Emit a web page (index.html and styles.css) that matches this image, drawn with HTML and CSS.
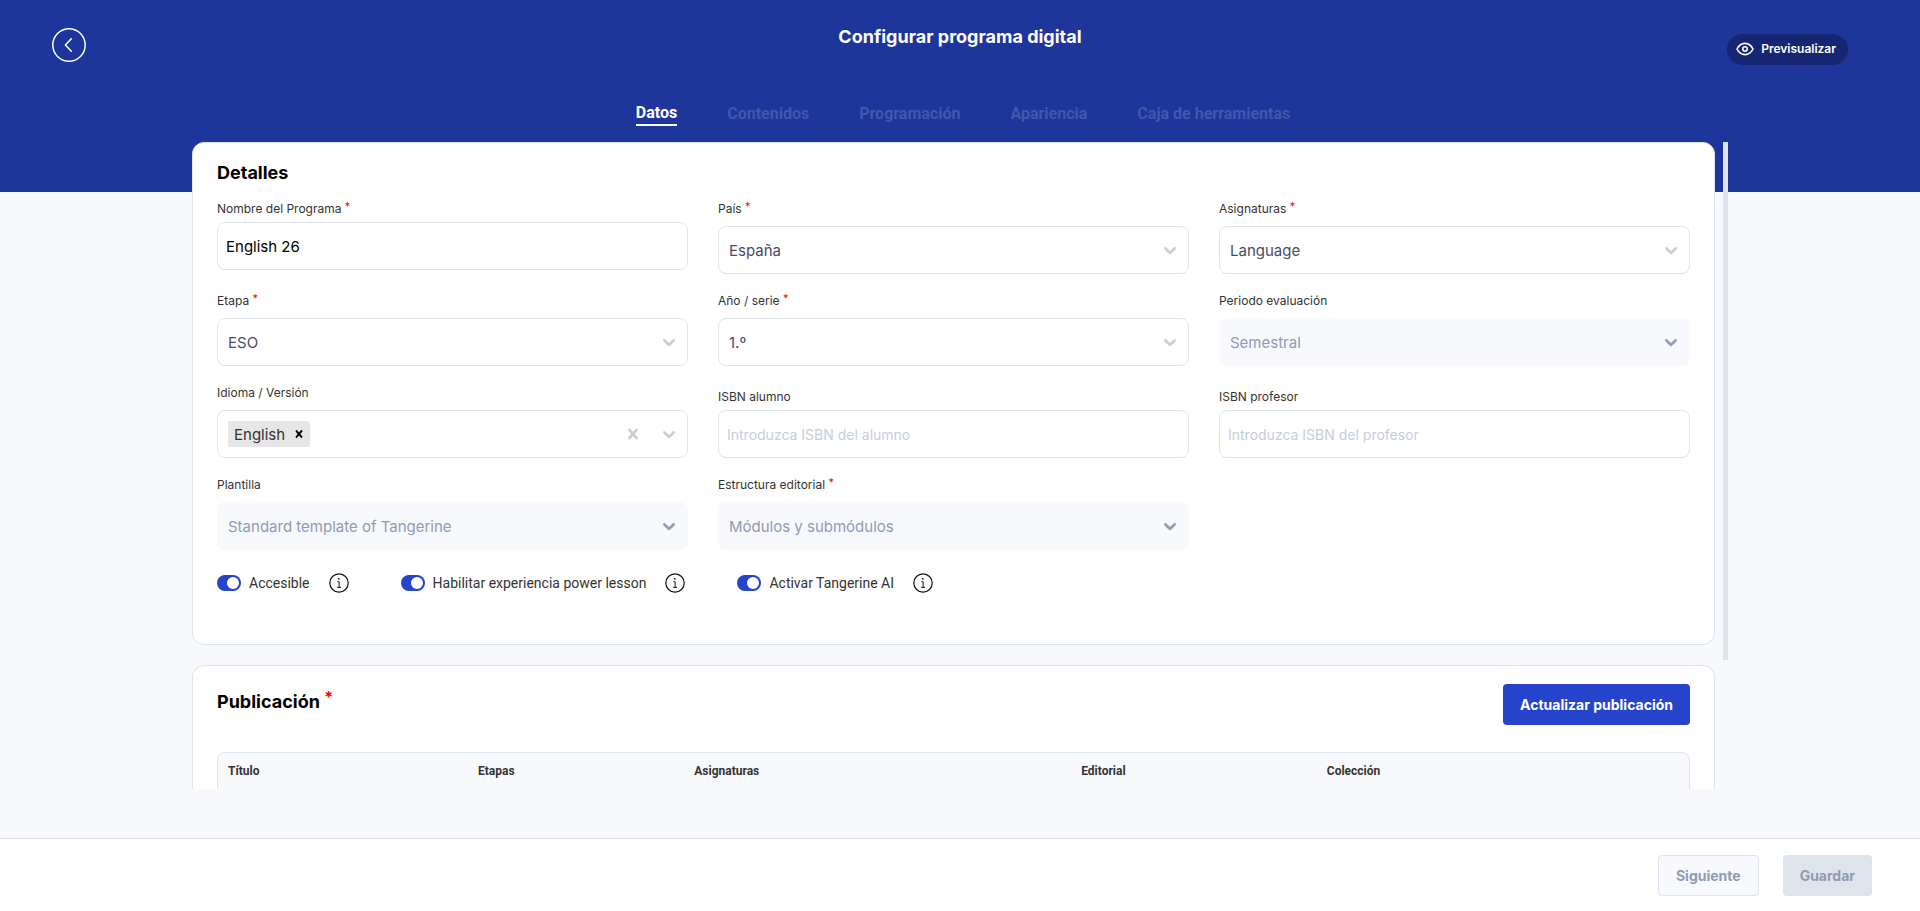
FILE: index.html
```html
<!DOCTYPE html>
<html lang="es">
<head>
  <meta charset="UTF-8">
  <meta name="viewport" content="width=device-width, initial-scale=1.0">
  <title>Configurar programa digital</title>
  <link rel="stylesheet" href="styles.css">
</head>
<body>
  <!-- shared icons -->
  <svg class="sprite" aria-hidden="true">
    <symbol id="chevron" viewBox="0 0 20 20">
      <path d="M4.516 7.548c0.436-0.446 1.043-0.481 1.576 0l3.908 3.747 3.908-3.747c0.533-0.481 1.141-0.446 1.574 0 0.436 0.445 0.408 1.197 0 1.615-0.406 0.418-4.695 4.502-4.695 4.502-0.217 0.223-0.502 0.335-0.787 0.335s-0.57-0.112-0.789-0.335c0 0-4.287-4.084-4.695-4.502s-0.436-1.17 0-1.615z"/>
    </symbol>
    <symbol id="cross" viewBox="0 0 20 20">
      <path d="M14.348 14.849c-0.469 0.469-1.229 0.469-1.697 0l-2.651-3.030-2.651 3.029c-0.469 0.469-1.229 0.469-1.697 0-0.469-0.469-0.469-1.229 0-1.697l2.758-3.15-2.759-3.152c-0.469-0.469-0.469-1.228 0-1.697s1.228-0.469 1.697 0l2.652 3.031 2.651-3.031c0.469-0.469 1.228-0.469 1.697 0s0.469 1.229 0 1.697l-2.758 3.152 2.758 3.15c0.469 0.469 0.469 1.229 0 1.698z"/>
    </symbol>
    <symbol id="info" viewBox="0 0 20 20">
      <circle cx="10" cy="10" r="9.2" fill="none" stroke="currentColor" stroke-width="1.2"/>
      <circle cx="9.8" cy="5.8" r="0.9"/>
      <path d="M8.4 8.7h1.7v5.6M8.2 14.4h3.8" fill="none" stroke="currentColor" stroke-width="1"/>
    </symbol>
  </svg>

  <header class="header">
    <button class="back" type="button" aria-label="Volver">
      <svg width="34" height="34" viewBox="0 0 34 34" fill="none" stroke="currentColor">
        <circle cx="17" cy="17" r="16.2" stroke-width="1.5"/>
        <path d="M19.3 10.8L13.4 17l5.9 6.2" stroke-width="1.6" stroke-linecap="round" stroke-linejoin="round"/>
      </svg>
    </button>
    <h1 class="title">Configurar programa digital</h1>
    <button class="preview" type="button">
      <svg width="18" height="14" viewBox="0 0 18 14" fill="none" stroke="currentColor" stroke-width="1.6">
        <path d="M1 7c1.8-3.6 4.6-5.6 8-5.6s6.2 2 8 5.6c-1.8 3.6-4.6 5.6-8 5.6S2.8 10.6 1 7z" stroke-linejoin="round"/>
        <circle cx="9" cy="7" r="2.2"/>
      </svg>
      Previsualizar
    </button>
  </header>

  <nav class="tabs">
    <a class="active" href="#datos">Datos</a>
    <a href="#contenidos">Contenidos</a>
    <a href="#programacion">Programación</a>
    <a href="#apariencia">Apariencia</a>
    <a href="#herramientas">Caja de herramientas</a>
  </nav>

  <div class="scroller">
    <main class="content">
      <section class="card details" id="datos">
        <h2>Detalles</h2>
        <form class="fields">
          <div class="field">
            <label for="nombre">Nombre del Programa <sup>*</sup></label>
            <input class="control" id="nombre" type="text" value="English 26">
          </div>
          <div class="field">
            <label for="pais">País <sup>*</sup></label>
            <div class="select">
              <select class="control" id="pais"><option>España</option></select>
              <svg class="arrow"><use href="#chevron"/></svg>
            </div>
          </div>
          <div class="field">
            <label for="asignaturas">Asignaturas <sup>*</sup></label>
            <div class="select">
              <select class="control" id="asignaturas"><option>Language</option></select>
              <svg class="arrow"><use href="#chevron"/></svg>
            </div>
          </div>
          <div class="field">
            <label for="etapa">Etapa <sup>*</sup></label>
            <div class="select">
              <select class="control" id="etapa"><option>ESO</option></select>
              <svg class="arrow"><use href="#chevron"/></svg>
            </div>
          </div>
          <div class="field">
            <label for="serie">Año / serie <sup>*</sup></label>
            <div class="select">
              <select class="control" id="serie"><option>1.º</option></select>
              <svg class="arrow"><use href="#chevron"/></svg>
            </div>
          </div>
          <div class="field">
            <label for="periodo">Periodo evaluación</label>
            <div class="select">
              <select class="control" id="periodo" disabled><option>Semestral</option></select>
              <svg class="arrow"><use href="#chevron"/></svg>
            </div>
          </div>
          <div class="field">
            <label for="idioma">Idioma / Versión</label>
            <div class="control multi">
              <span class="chip">English
                <button type="button" aria-label="Quitar English"><svg><use href="#cross"/></svg></button>
              </span>
              <input id="idioma" type="text">
              <button class="clear" type="button" aria-label="Borrar todo"><svg><use href="#cross"/></svg></button>
              <button type="button" aria-label="Abrir"><svg><use href="#chevron"/></svg></button>
            </div>
          </div>
          <div class="field isbn">
            <label for="isbn-alumno">ISBN alumno</label>
            <input class="control" id="isbn-alumno" type="text" placeholder="Introduzca ISBN del alumno">
          </div>
          <div class="field isbn">
            <label for="isbn-profesor">ISBN profesor</label>
            <input class="control" id="isbn-profesor" type="text" placeholder="Introduzca ISBN del profesor">
          </div>
          <div class="field">
            <label for="plantilla">Plantilla</label>
            <div class="select">
              <select class="control" id="plantilla" disabled><option>Standard template of Tangerine</option></select>
              <svg class="arrow"><use href="#chevron"/></svg>
            </div>
          </div>
          <div class="field">
            <label for="estructura">Estructura editorial <sup>*</sup></label>
            <div class="select">
              <select class="control" id="estructura" disabled><option>Módulos y submódulos</option></select>
              <svg class="arrow"><use href="#chevron"/></svg>
            </div>
          </div>
        </form>
        <div class="switches">
          <div class="switch">
            <label><input type="checkbox" checked> Accesible</label>
            <svg class="info"><use href="#info"/></svg>
          </div>
          <div class="switch">
            <label><input type="checkbox" checked> Habilitar experiencia power lesson</label>
            <svg class="info"><use href="#info"/></svg>
          </div>
          <div class="switch">
            <label><input type="checkbox" checked> Activar Tangerine AI</label>
            <svg class="info"><use href="#info"/></svg>
          </div>
        </div>
      </section>

      <section class="card">
        <div class="card-head">
          <h2>Publicación <sup>*</sup></h2>
          <button class="btn primary" type="button">Actualizar publicación</button>
        </div>
        <div class="table-wrap">
          <table>
            <thead>
              <tr>
                <th class="c-title">Título</th>
                <th class="c-stage">Etapas</th>
                <th class="c-subject">Asignaturas</th>
                <th class="c-editorial">Editorial</th>
                <th>Colección</th>
              </tr>
            </thead>
          </table>
        </div>
      </section>
    </main>
    <div class="bar"><div class="thumb"></div></div>
  </div>

  <footer class="footer">
    <button class="btn light" type="button" disabled>Siguiente</button>
    <button class="btn grey" type="button" disabled>Guardar</button>
  </footer>
</body>
</html>
```
FILE: styles.css
```css
* {
  box-sizing: border-box;
}
body {
  margin: 0;
  height: 100vh;
  display: flex;
  flex-direction: column;
  font-family: Inter, sans-serif;
  color: #333;
  background: linear-gradient(#1e359c 192px, #f8f9fd 192px);
}
button, input, select {
  font-family: inherit;
}
button {
  padding: 0;
  border: 0;
  background: none;
}
h1, h2 {
  margin: 0;
  font-size: 18px;
  line-height: 24px;
  font-weight: 700;
}
.sprite {
  position: absolute;
  width: 0;
  height: 0;
}

/* header */
.header {
  flex: none;
  display: grid;
  grid-template-columns: 1fr auto 1fr;
  align-items: start;
  height: 92px;
  padding: 25px 72px 0 52px;
  color: #fff;
}
.back {
  width: 34px;
  height: 34px;
  margin-top: 3px;
  color: #fff;
}
.back svg {
  display: block;
}
.title {
  padding-left: 20px;
}
.preview {
  justify-self: end;
  display: flex;
  align-items: center;
  gap: 7px;
  height: 31px;
  margin-top: 9px;
  padding: 0 12px 2px 9px;
  border-radius: 16px;
  background: #172672;
  color: #fff;
  font-size: 12px;
  font-weight: 600;
}
.tabs {
  flex: none;
  display: flex;
  justify-content: center;
  gap: 50px;
  height: 50px;
  padding-top: 10px;
  padding-left: 6px;
  font-family: Roboto, sans-serif;
  font-size: 16px;
  line-height: 24px;
  font-weight: 700;
}
.tabs a {
  color: #4257ae;
  text-decoration: none;
}
.tabs .active {
  height: 24px;
  line-height: 22px;
  color: #fff;
  border-bottom: 2px solid #fff;
}

/* scrolling content, with its own thin bar */
.scroller {
  flex: 1;
  display: flex;
  gap: 8px;
  width: 80%;
  min-height: 0;
  margin: 0 auto 49px;
}
.content {
  flex: 1;
  overflow-y: auto;
  scrollbar-width: none;
}
.bar {
  width: 5px;
}
.thumb {
  height: 80%;
  background: #dee4ec;
}
.card {
  padding: 18px 24px;
  background: #fff;
  border: 1px solid #dee4ec;
  border-radius: 12px;
}
.card h2 {
  color: #000;
}
.details {
  margin-bottom: 20px;
  padding-bottom: 51px;
}
.fields {
  display: grid;
  grid-template-columns: repeat(3, 1fr);
  column-gap: 30px;
  row-gap: 16px;
  margin-top: 13px;
}
.field label {
  display: block;
  font-size: 12px;
  line-height: 22px;
}
.isbn {
  align-self: end;
}
sup {
  color: #f00;
  font-size: 11px;
  line-height: 0;
  vertical-align: 3px;
}
.control {
  display: block;
  width: 100%;
  height: 48px;
  padding: 0 8px;
  border: 1px solid #dee4ec;
  border-radius: 8px;
  background: #fff;
  color: #000;
  font-size: 15px;
}
input.control {
  margin-top: 2px;
}
input.control::placeholder {
  color: #c5cede;
  font-size: 14px;
}
.select {
  position: relative;
  padding-top: 6px;
}
select.control {
  appearance: none;
  padding: 0 10px;
  color: #4a4b63;
}
select.control:disabled {
  border-color: #f8f9fd;
  background: #f8f9fd;
  color: #8f9bb3;
  opacity: 1;
}
.arrow {
  position: absolute;
  right: 9px;
  bottom: 14px;
  width: 20px;
  height: 20px;
  fill: #ccc;
  pointer-events: none;
}
select:disabled + .arrow {
  fill: #8f9bb3;
}
.arrow, .multi svg {
  stroke: #ccc;
  stroke-width: 0.5;
}
select:disabled + .arrow {
  stroke: #8f9bb3;
}
.multi {
  display: flex;
  align-items: center;
  margin-top: 6px;
  padding: 0 8px 0 10px;
}
.multi svg {
  display: block;
  width: 20px;
  height: 20px;
  fill: #ccc;
}
.multi input {
  flex: 1;
  min-width: 0;
  border: 0;
  outline: 0;
}
.chip {
  display: flex;
  align-items: center;
  height: 26px;
  padding-left: 6px;
  border-radius: 2px;
  background: #e6e6e6;
  color: #333;
}
.chip button {
  padding: 0 4px 0 7px;
}
.chip svg {
  width: 14px;
  height: 14px;
  fill: #000;
  stroke: #000;
}
.clear {
  margin-right: 16px;
}
.switches {
  display: flex;
  gap: 52px;
  margin-top: 23px;
  font-family: Roboto, sans-serif;
  font-size: 14px;
}
.switch, .switch label {
  display: flex;
  align-items: center;
}
.switch {
  gap: 19px;
}
.switch label {
  gap: 8px;
}
.switch input {
  appearance: none;
  width: 24px;
  height: 16px;
  margin: 0;
  padding: 2px;
  border-radius: 8px;
  background: #2643cc;
}
.switch input::before {
  content: "";
  display: block;
  width: 12px;
  height: 12px;
  margin-left: auto;
  border-radius: 50%;
  background: #fff;
}
.info {
  width: 20px;
  height: 20px;
  color: #111;
  fill: #111;
}

/* publication */
.card-head {
  display: flex;
  justify-content: space-between;
}
.card-head h2 {
  padding-top: 6px;
}
.card-head sup {
  font-size: 16px;
  vertical-align: 5px;
}
.btn {
  height: 41px;
  padding: 0 17px;
  border-radius: 4px;
  font-size: 14px;
  font-weight: 700;
}
.primary {
  background: #2643cc;
  color: #fff;
}
.table-wrap {
  min-height: 120px;
  margin-top: 27px;
  border: 1px solid #dee4ec;
  border-radius: 8px;
  background: #f8f9fd;
}
table {
  width: 100%;
  border-collapse: collapse;
  table-layout: fixed;
}
th {
  height: 37px;
  padding: 0 10px;
  border-bottom: 1px solid #edf1f7;
  font-family: Roboto, sans-serif;
  font-size: 12px;
  font-weight: 700;
  text-align: left;
}
.c-title {
  width: 17%;
}
.c-stage {
  width: 14.7%;
}
.c-subject {
  width: 26.3%;
}
.c-editorial {
  width: 16.7%;
}

/* footer */
.footer {
  flex: none;
  display: flex;
  justify-content: flex-end;
  gap: 24px;
  height: 73px;
  padding: 16px 48px 0 0;
  border-top: 1px solid #dee4ec;
  background: #fff;
}
.light {
  border: 1px solid #dee4ec;
  background: #f8f9fd;
  color: #8f9bb3;
}
.grey {
  background: #dee4ec;
  color: #8f9bb3;
}
```
